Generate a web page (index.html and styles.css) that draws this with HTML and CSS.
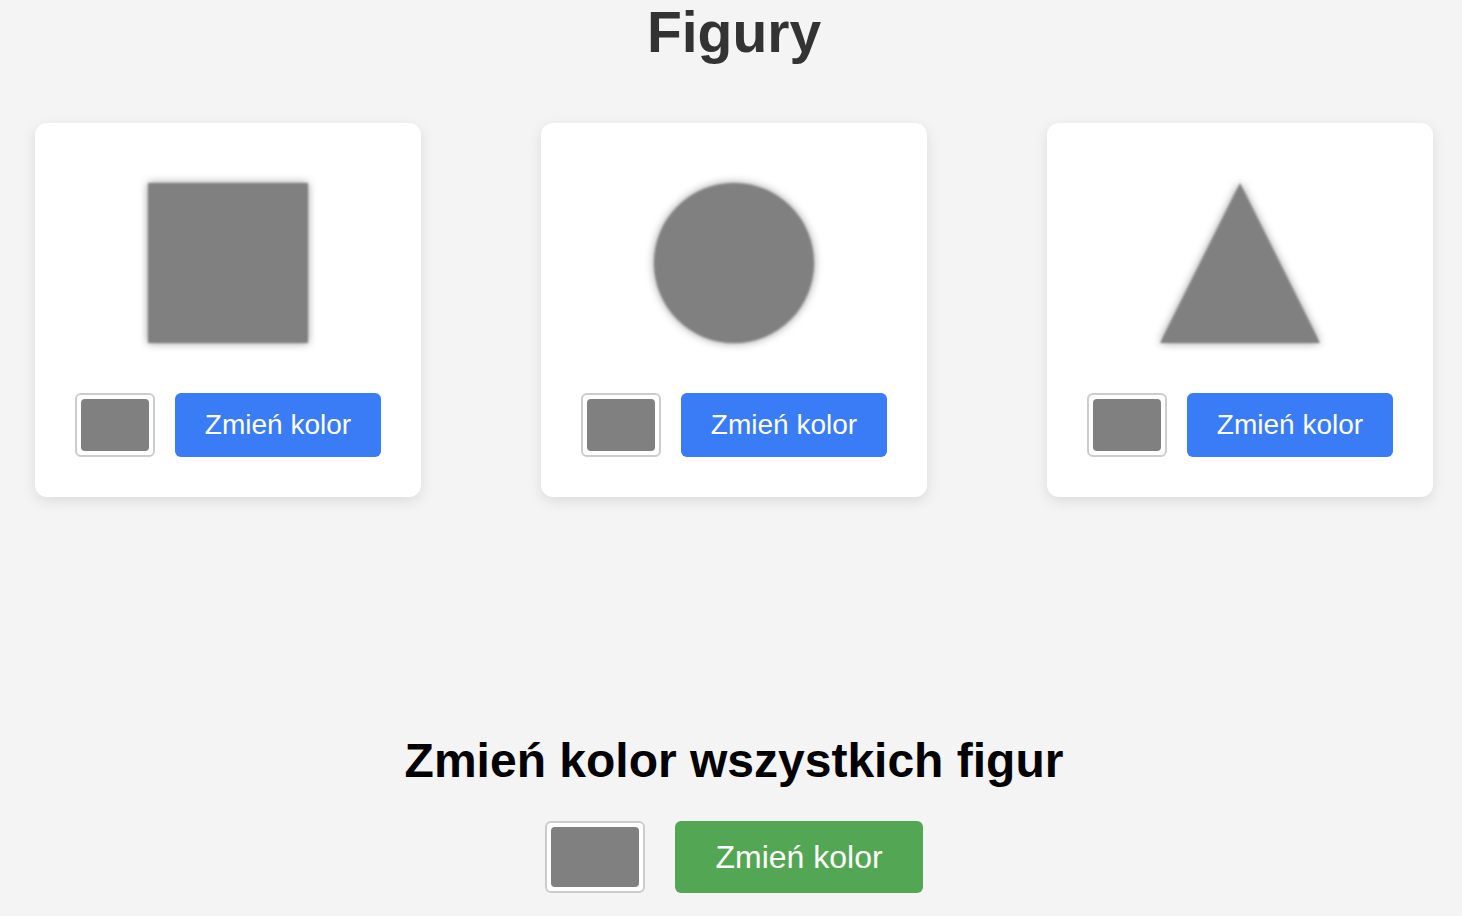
FILE: index.html
```html
<!DOCTYPE html>
<html lang="pl">
<head>
<meta charset="utf-8">
<title>Figury</title>
<link rel="stylesheet" href="styles.css">
</head>
<body>
<h1 class="title">Figury</h1>
<div class="cards">
  <div class="card">
    <div class="shape-box"><div class="shape square"></div></div>
    <div class="controls">
      <input class="picker" type="color" value="#808080">
      <button class="btn btn-blue">Zmień kolor</button>
    </div>
  </div>
  <div class="card">
    <div class="shape-box"><div class="shape circle"></div></div>
    <div class="controls">
      <input class="picker" type="color" value="#808080">
      <button class="btn btn-blue">Zmień kolor</button>
    </div>
  </div>
  <div class="card">
    <div class="shape-box">
      <svg class="shape triangle" width="160" height="160" viewBox="0 0 160 160"><polygon points="80,0 160,160 0,160" fill="#808080"/></svg>
    </div>
    <div class="controls">
      <input class="picker" type="color" value="#808080">
      <button class="btn btn-blue">Zmień kolor</button>
    </div>
  </div>
</div>
<section class="all">
  <h2 class="all-title">Zmień kolor wszystkich figur</h2>
  <div class="all-controls">
    <input class="picker picker-lg" type="color" value="#808080">
    <button class="btn btn-green">Zmień kolor</button>
  </div>
</section>
</body>
</html>
```

FILE: styles.css
```css
html, body {
  margin: 0;
  padding: 0;
}
body {
  background: #f4f4f4;
  font-family: "Liberation Sans", Arial, Helvetica, sans-serif;
  width: 1462px;
  height: 916px;
  overflow: hidden;
}
.title {
  margin: 0;
  padding: 4px 0 0 6px;
  font-size: 57px;
  line-height: 57px;
  font-weight: bold;
  color: #333;
  text-align: center;
}
.cards {
  display: flex;
  gap: 120px;
  padding-left: 35px;
  margin-top: 62px;
}
.card {
  width: 386px;
  box-sizing: border-box;
  background: #fff;
  border-radius: 12px;
  box-shadow: 0 4px 14px rgba(0, 0, 0, 0.1);
  padding: 60px 0 40px;
  display: flex;
  flex-direction: column;
  align-items: center;
  gap: 50px;
}
.shape-box {
  width: 160px;
  height: 160px;
}
.shape {
  width: 160px;
  height: 160px;
  background: #808080;
  display: block;
  filter: blur(0.8px) drop-shadow(0 0 4px rgba(0, 0, 0, 0.4));
}
.circle {
  border-radius: 50%;
}
.triangle {
  background: none;
}
.controls {
  display: flex;
  gap: 20px;
  align-items: center;
}
.picker {
  -webkit-appearance: none;
  appearance: none;
  width: 80px;
  height: 64px;
  box-sizing: border-box;
  border: 2px solid #cccccc;
  border-radius: 6px;
  padding: 4px;
  background: #fff;
  margin: 0;
  cursor: pointer;
}
.picker::-webkit-color-swatch-wrapper {
  padding: 0;
}
.picker::-webkit-color-swatch {
  border: none;
  border-radius: 4px;
}
.picker-lg {
  width: 100px;
  height: 72px;
}
.btn {
  border: none;
  color: #fff;
  font-family: "Liberation Sans", Arial, Helvetica, sans-serif;
  cursor: pointer;
  margin: 0;
}
.btn-blue {
  width: 206px;
  height: 64px;
  background: #3a7bf6;
  border-radius: 6px;
  font-size: 28px;
}
.btn-green {
  width: 248px;
  height: 72px;
  background: #53a653;
  border-radius: 6px;
  font-size: 32px;
}
.all {
  margin-top: 240px;
  padding-left: 6px;
  text-align: center;
}
.all-title {
  margin: 0;
  font-size: 48px;
  line-height: 48px;
  font-weight: bold;
  color: #000;
}
.all-controls {
  margin-top: 36px;
  display: flex;
  justify-content: center;
  gap: 30px;
}
```
